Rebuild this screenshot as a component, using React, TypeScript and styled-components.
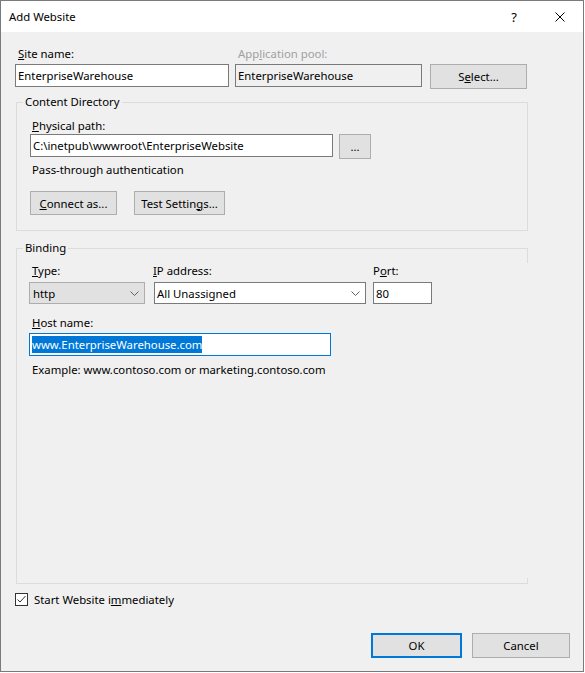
import React from "react";
import styled, { createGlobalStyle, css } from "styled-components";

const GlobalStyle = createGlobalStyle`
  html, body { margin: 0; padding: 0; background: #ffffff; }
  body {
    font-family: "Noto Sans", "Segoe UI", sans-serif;
    font-size: 11.35px;
    color: #000000;
  }
  * { box-sizing: border-box; }
`;

const Window = styled.div`
  width: 584px;
  height: 672px;
  border: 1px solid #7a7a7a;
  display: flex;
  flex-direction: column;
  background: #f0f0f0;
`;

const TitleBar = styled.div`
  height: 31px;
  background: #ffffff;
  display: flex;
  align-items: center;
  padding-left: 8px;
`;

const TitleText = styled.div`
  flex: 1;
  line-height: 16px;
  padding-top: 1px;
`;

const CaptionButton = styled.div`
  width: 46px;
  height: 31px;
  display: flex;
  align-items: center;
  justify-content: center;
  font-size: 13px;
  color: #000;
`;

const Body = styled.div`
  flex: 1;
  display: flex;
  flex-direction: column;
  padding: 14px 13px 13px 14px;
`;

const Row = styled.div<{ $mt?: number; $ml?: number; $gap?: number }>`
  display: flex;
  align-items: flex-start;
  margin-top: ${(p) => p.$mt ?? 0}px;
  margin-left: ${(p) => p.$ml ?? 0}px;
  gap: ${(p) => p.$gap ?? 0}px;
`;

const Field = styled.div<{ $w: number; $ml?: number; $gap?: number }>`
  display: flex;
  flex-direction: column;
  width: ${(p) => p.$w}px;
  margin-left: ${(p) => p.$ml ?? 0}px;
  gap: ${(p) => p.$gap ?? 2}px;
`;

const Label = styled.div<{ $indent?: number; $disabled?: boolean; $mt?: number }>`
  line-height: 16px;
  height: 16px;
  white-space: nowrap;
  margin-left: ${(p) => p.$indent ?? 0}px;
  margin-top: ${(p) => p.$mt ?? 0}px;
  color: ${(p) => (p.$disabled ? "#a0a0a0" : "#000000")};
`;

const U = styled.span`
  text-decoration: underline;
  text-underline-offset: 1px;
`;

const TextBox = styled.div<{ $w?: number; $h?: number; $readonly?: boolean; $focused?: boolean }>`
  width: ${(p) => (p.$w ? `${p.$w}px` : "100%")};
  height: ${(p) => p.$h ?? 23}px;
  border: 1px solid ${(p) => (p.$focused ? "#0078d7" : "#7a7a7a")};
  background: ${(p) => (p.$readonly ? "#f0f0f0" : "#ffffff")};
  padding-left: 2px;
  display: flex;
  align-items: center;
  white-space: nowrap;
  overflow: hidden;
`;

const Selected = styled.span`
  background: #0078d7;
  color: #ffffff;
  line-height: 17px;
  display: inline-block;
`;

const Combo = styled.div<{ $list?: boolean }>`
  width: 100%;
  height: 22px;
  border: 1px solid ${(p) => (p.$list ? "#adadad" : "#7a7a7a")};
  background: ${(p) => (p.$list ? "#e1e1e1" : "#ffffff")};
  display: flex;
  align-items: center;
  justify-content: space-between;
  padding: 0 5px 0 ${(p) => (p.$list ? 3 : 2)}px;
  white-space: nowrap;
`;

const PushButton = styled.button<{ $w: number; $h?: number; $primary?: boolean }>`
  width: ${(p) => p.$w}px;
  height: ${(p) => p.$h ?? 24}px;
  padding: 0;
  margin: 0;
  font: inherit;
  color: #000000;
  background: #e1e1e1;
  border: 1px solid #adadad;
  display: flex;
  align-items: center;
  justify-content: center;
  white-space: nowrap;
  ${(p) =>
    p.$primary &&
    css`
      border: 2px solid #0078d7;
    `}
`;

const GroupBox = styled.div<{ $mt: number; $h?: number; $broken?: boolean }>`
  position: relative;
  width: 512px;
  margin-left: 1px;
  margin-top: ${(p) => p.$mt}px;
  border: 1px solid #dcdcdc;
  display: flex;
  flex-direction: column;
  ${(p) => p.$h !== undefined && css`height: ${p.$h}px;`}
  ${(p) =>
    p.$broken &&
    css`
      border-right-color: transparent;
      &::before,
      &::after {
        content: "";
        position: absolute;
        right: -1px;
        width: 1px;
        background: #dcdcdc;
      }
      &::before {
        top: -1px;
        height: 15px;
      }
      &::after {
        bottom: -1px;
        height: 6px;
      }
    `}
`;

const GroupTitle = styled.div`
  margin: -9px 0 0 6px;
  padding: 0 2px;
  width: fit-content;
  line-height: 16px;
  height: 16px;
  background: #f0f0f0;
`;

const GroupContent = styled.div<{ $pb?: number }>`
  display: flex;
  flex-direction: column;
  padding: 0 0 ${(p) => p.$pb ?? 0}px 13px;
`;

const Text = styled.div<{ $mt?: number; $indent?: number }>`
  line-height: 16px;
  white-space: nowrap;
  margin-top: ${(p) => p.$mt ?? 0}px;
  margin-left: ${(p) => p.$indent ?? 0}px;
`;

const CheckRow = styled.label`
  display: flex;
  align-items: flex-start;
  gap: 6px;
  margin-top: 8px;
  line-height: 16px;
`;

const CheckBox = styled.span`
  width: 13px;
  height: 13px;
  margin-top: 1px;
  border: 1px solid #333333;
  background: #ffffff;
  display: flex;
  align-items: center;
  justify-content: center;
`;

const Footer = styled.div`
  margin-top: auto;
  display: flex;
  justify-content: flex-end;
  gap: 10px;
`;

const Chevron = () => (
  <svg width="9" height="5" viewBox="0 0 9 5">
    <polyline points="0.5,0.5 4.5,4.5 8.5,0.5" fill="none" stroke="#606060" strokeWidth="1" />
  </svg>
);

const CloseIcon = () => (
  <svg width="10" height="10" viewBox="0 0 10 10">
    <path d="M0.5 0.5 L9.5 9.5 M9.5 0.5 L0.5 9.5" stroke="#000" strokeWidth="1" fill="none" />
  </svg>
);

const CheckMark = () => (
  <svg width="11" height="11" viewBox="0 0 11 11">
    <polyline points="1.5,5.5 4,8 9.5,2" fill="none" stroke="#333333" strokeWidth="1" />
  </svg>
);

export default function App() {
  return (
    <>
      <GlobalStyle />
      <Window>
        <TitleBar>
          <TitleText>Add Website</TitleText>
          <CaptionButton>?</CaptionButton>
          <CaptionButton>
            <CloseIcon />
          </CaptionButton>
        </TitleBar>
        <Body>
          <Row>
            <Field $w={214}>
              <Label $indent={3}>
                <U>S</U>ite name:
              </Label>
              <TextBox>EnterpriseWarehouse</TextBox>
            </Field>
            <Field $w={187} $ml={6}>
              <Label $indent={3} $disabled>
                App<U>l</U>ication pool:
              </Label>
              <TextBox $readonly>EnterpriseWarehouse</TextBox>
            </Field>
            <Row $mt={18} $ml={8}>
              <PushButton $w={97} $h={25}>
                S<U>e</U>lect...
              </PushButton>
            </Row>
          </Row>

          <GroupBox $mt={13}>
            <GroupTitle>Content Directory</GroupTitle>
            <GroupContent $pb={15}>
              <Label $indent={2} $mt={8}>
                <U>P</U>hysical path:
              </Label>
              <Row $gap={6}>
                <TextBox $w={303}>C:\inetpub\wwwroot\EnterpriseWebsite</TextBox>
                <PushButton $w={32} $h={25}>
                  ...
                </PushButton>
              </Row>
              <Text $mt={3} $indent={2}>
                Pass-through authentication
              </Text>
              <Row $mt={13} $gap={17}>
                <PushButton $w={87}>
                  <U>C</U>onnect as...
                </PushButton>
                <PushButton $w={91}>
                  Test Settin<U>g</U>s...
                </PushButton>
              </Row>
            </GroupContent>
          </GroupBox>

          <GroupBox $mt={17} $h={336} $broken>
            <GroupTitle>Binding</GroupTitle>
            <GroupContent>
              <Row $mt={7}>
                <Field $w={116} $ml={-1} $gap={3}>
                  <Label $indent={3}>
                    <U>T</U>ype:
                  </Label>
                  <Combo $list>
                    http
                    <Chevron />
                  </Combo>
                </Field>
                <Field $w={212} $ml={9} $gap={3}>
                  <Label $indent={-1}>
                    <U>I</U>P address:
                  </Label>
                  <Combo>
                    All Unassigned
                    <Chevron />
                  </Combo>
                </Field>
                <Field $w={59} $ml={7} $gap={3}>
                  <Label>
                    P<U>o</U>rt:
                  </Label>
                  <TextBox $h={22}>80</TextBox>
                </Field>
              </Row>
              <Field $w={302} $ml={-1} $gap={2}>
                <Label $indent={3} $mt={11}>
                  <U>H</U>ost name:
                </Label>
                <TextBox $focused>
                  <Selected>www.EnterpriseWarehouse.com</Selected>
                </TextBox>
              </Field>
              <Text $mt={6} $indent={2}>
                Example: www.contoso.com or marketing.contoso.com
              </Text>
            </GroupContent>
          </GroupBox>

          <CheckRow>
            <CheckBox>
              <CheckMark />
            </CheckBox>
            <span>
              Start Website i<U>m</U>mediately
            </span>
          </CheckRow>

          <Footer>
            <PushButton $w={91} $h={25} $primary>
              OK
            </PushButton>
            <PushButton $w={98} $h={25}>
              Cancel
            </PushButton>
          </Footer>
        </Body>
      </Window>
    </>
  );
}
